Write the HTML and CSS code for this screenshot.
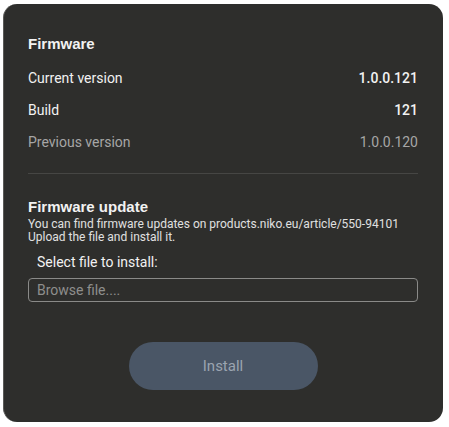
FILE: index.html
```html
<!DOCTYPE html>
<html>
<head>
<meta charset="utf-8">
<link rel="stylesheet" href="styles.css">
</head>
<body>
<div class="card">
  <div class="title">Firmware</div>
  <div class="row"><span>Current version</span><span class="val">1.0.0.121</span></div>
  <div class="row"><span>Build</span><span class="val">121</span></div>
  <div class="row muted"><span>Previous version</span><span class="val light">1.0.0.120</span></div>
  <div class="divider"></div>
  <div class="title2">Firmware update</div>
  <div class="desc">You can find firmware updates on products.niko.eu/article/550-94101<br>Upload the file and install it.</div>
  <div class="select">Select file to install:</div>
  <div class="input">Browse file....</div>
  <div class="actions"><button class="btn">Install</button></div>
</div>
</body>
</html>
```
FILE: styles.css
```css
html, body { margin: 0; padding: 0; background: #ffffff; }
body { font-family: Roboto, "Liberation Sans", sans-serif; color: #f2f2f2; }
.card {
  box-sizing: border-box;
  margin: 4px 6px 5px 3px;
  width: 440px;
  height: 418px;
  background: #2e2e2c;
  border-radius: 14px;
  border-left: 1px solid #5a5a58;
  padding: 30px 25px 32px 24px;
  display: flex;
  flex-direction: column;
}
.title { font-size: 15px; font-weight: bold; line-height: 20px; margin-bottom: 8px; font-family: "Liberation Sans", Arial, sans-serif; }
.row { display: flex; justify-content: space-between; align-items: center; height: 32px; font-size: 14px; }
.val { font-weight: 500; }
.muted { color: #a6a6a6; }
.light { font-weight: 400; }
.divider { height: 1px; background: #464644; margin-top: 15px; }
.title2 { font-size: 15px; font-weight: bold; line-height: 20px; margin-top: 23px; font-family: "Liberation Sans", Arial, sans-serif; }
.desc { font-size: 12px; line-height: 13px; color: #e0e0e0; margin-top: 1px; }
.select { font-size: 14px; line-height: 20px; margin-top: 8px; padding-left: 9px; }
.input {
  box-sizing: border-box;
  margin-top: 6px;
  height: 24px;
  border: 1px solid #8a8a88;
  border-radius: 4px;
  font-size: 14px;
  line-height: 22px;
  padding-left: 8px;
  color: #8e8e8c;
}
.actions { display: flex; justify-content: center; margin-top: 40px; }
.btn {
  width: 189px; height: 48px; border-radius: 24px; border: none;
  background: #4a5666; color: #9ba4b0;
  font-family: Roboto, sans-serif; font-size: 15px;
}
```
